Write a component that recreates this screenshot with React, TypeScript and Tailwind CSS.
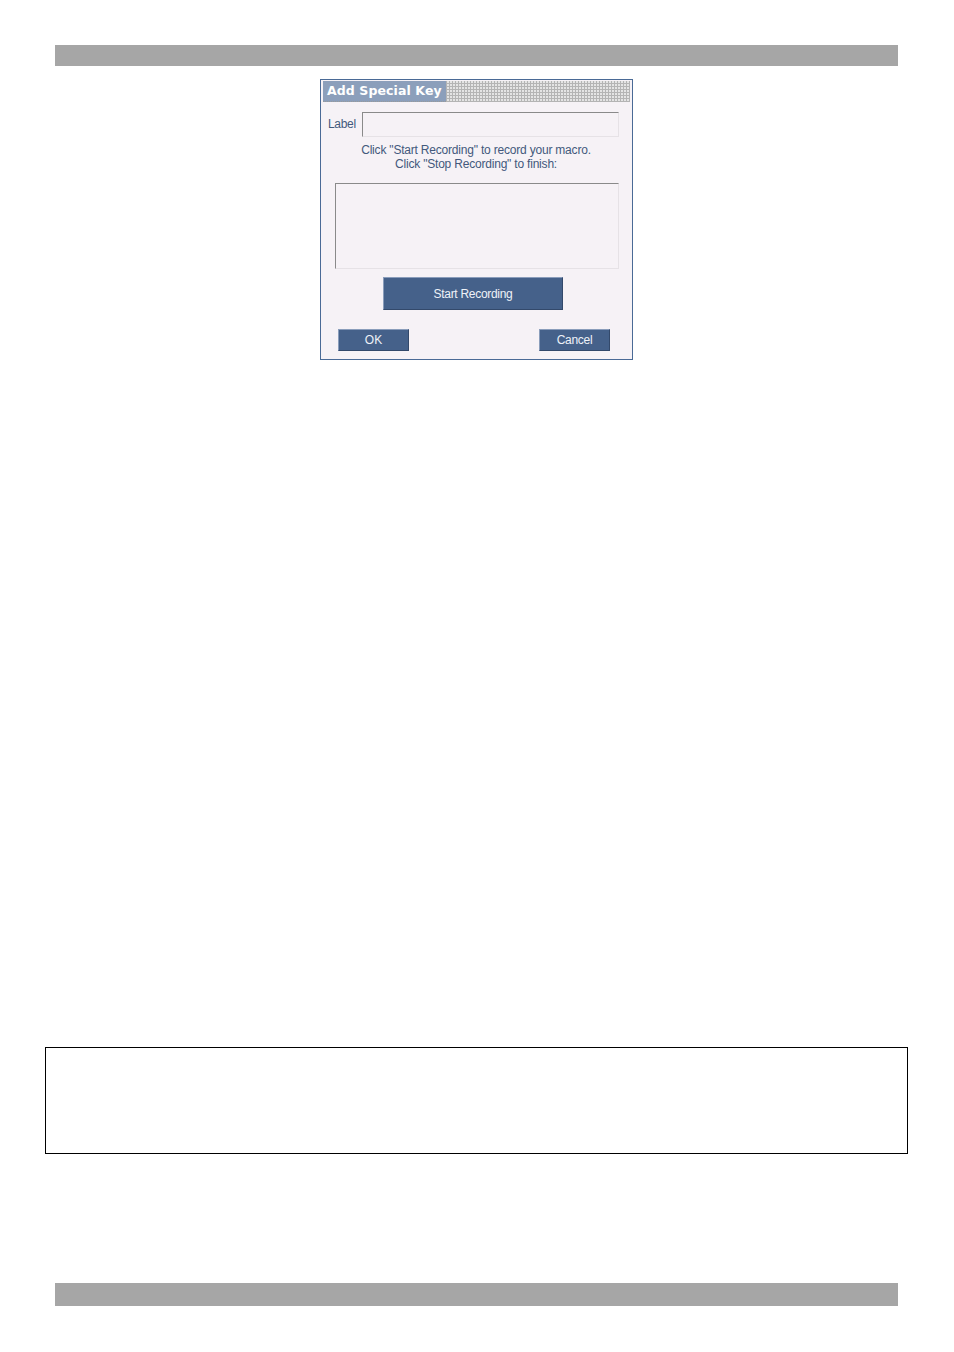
import React from "react";

export default function App() {
  return (
    <div className="w-[954px] h-[1352px] bg-white flex flex-col">
      <div className="mt-[45px] ml-[55px] w-[843px] h-[21px] bg-[#a6a6a6]" />

      <div className="mt-[13px] ml-[320px] w-[313px] border border-[#4a6a96] bg-[#f6f2f6] flex flex-col font-['Liberation_Sans',Arial,sans-serif]">
        <div className="mx-[2px] mt-[1px] h-[21px] flex">
          <div className="w-[123px] bg-[#8c9fbb] border-b border-dotted border-[#9a9a9a] flex items-center pl-[4px] text-white text-[12.5px] font-bold font-['DejaVu_Sans',Verdana,sans-serif] leading-none tracking-[0.1px]">
            Add Special Key
          </div>
          <div className="flex-1 bg-[#e4e4e4] bg-[repeating-linear-gradient(90deg,#b4b4b4_0px,#b4b4b4_1px,transparent_1px,transparent_3px),repeating-linear-gradient(0deg,#b4b4b4_0px,#b4b4b4_1px,transparent_1px,transparent_3px)]" />
        </div>

        <div className="mt-[10px] flex items-center">
          <span className="ml-[7px] w-[34px] text-[12px] text-[#43597c] tracking-[-0.3px] -mt-[2px]">Label</span>
          <div className="w-[257px] h-[25px] border-t border-l border-[#8a8a8a] border-r border-b border-r-[#e6e2e6] border-b-[#e6e2e6]" />
        </div>

        <div className="mt-[6px] text-center text-[12px] leading-[14px] text-[#43597c] tracking-[-0.2px] pr-[1px]">
          <div>Click "Start Recording" to record your macro.</div>
          <div>Click "Stop Recording" to finish:</div>
        </div>

        <div className="mt-[12px] ml-[14px] w-[284px] h-[86px] border-t border-l border-[#8a8a8a] border-r border-b border-r-[#e6e2e6] border-b-[#e6e2e6]" />

        <div className="mt-[8px] ml-[62px] w-[180px] h-[33px] bg-[#45618a] border-t border-l border-[#8a9dbb] border-r border-b border-r-[#33496b] border-b-[#33496b] flex items-center justify-center text-[12px] text-[#eef2f8] tracking-[-0.3px]">
          Start Recording
        </div>

        <div className="mt-[19px] mb-[8px] flex">
          <div className="ml-[17px] w-[71px] h-[22px] bg-[#45618a] border-t border-l border-[#8a9dbb] border-r border-b border-r-[#33496b] border-b-[#33496b] flex items-center justify-center text-[12px] text-[#eef2f8]">
            OK
          </div>
          <div className="ml-[130px] w-[71px] h-[22px] bg-[#45618a] border-t border-l border-[#8a9dbb] border-r border-b border-r-[#33496b] border-b-[#33496b] flex items-center justify-center text-[12px] text-[#eef2f8] tracking-[-0.3px]">
            Cancel
          </div>
        </div>
      </div>

      <div className="mt-[687px] ml-[45px] w-[863px] h-[107px] border-[1.5px] border-black" />

      <div className="mt-[129px] ml-[55px] w-[843px] h-[23px] bg-[#a6a6a6]" />
    </div>
  );
}
